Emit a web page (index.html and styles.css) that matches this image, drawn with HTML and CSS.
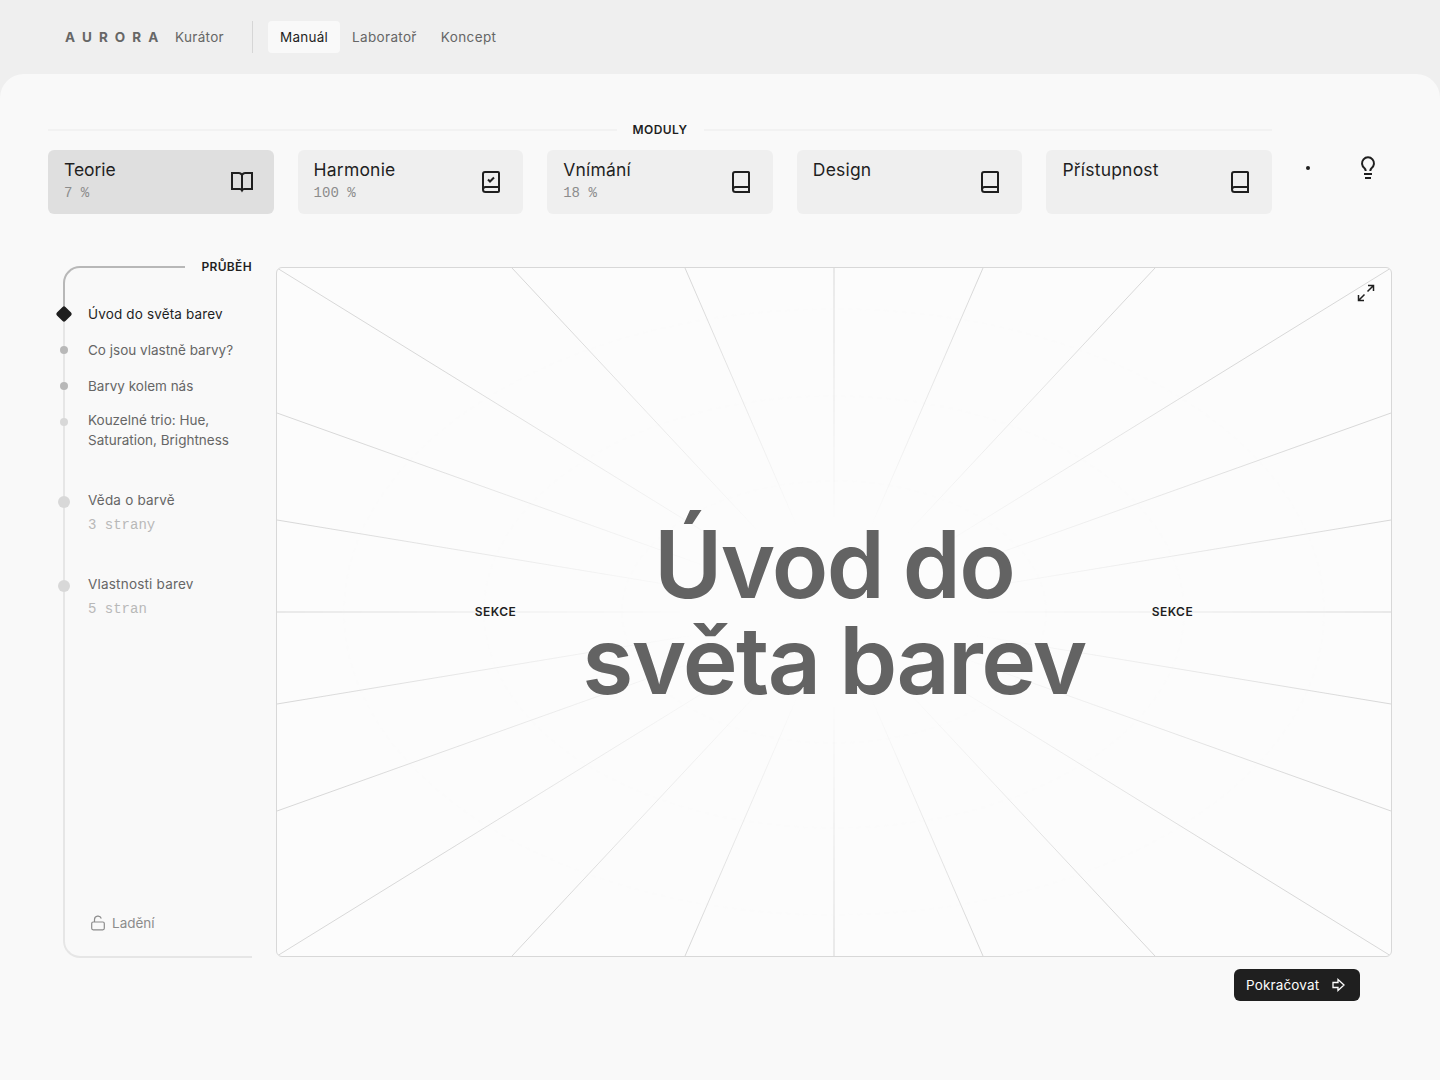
FILE: index.html
```html
<!DOCTYPE html>
<html lang="cs">
<head>
<meta charset="utf-8">
<title>Aurora – Manuál</title>
<link rel="stylesheet" href="styles.css">
</head>
<body>
<header class="topbar">
  <a class="brand"><span class="brand-name">AURORA</span><span>Kurátor</span></a>
  <nav class="nav">
    <a class="nav-item active">Manuál</a>
    <a class="nav-item">Laboratoř</a>
    <a class="nav-item wide">Koncept</a>
  </nav>
</header>
<main class="sheet">
  <section class="top">
    <div class="modules">
      <div class="modules-title"><i></i><span class="label">MODULY</span><i></i></div>
      <div class="cards">
        <div class="card current"><div><h2>Teorie</h2><p>7 %</p></div>
          <svg class="icon" viewBox="0 0 24 24"><path d="M12 5v16M12 5c-.8-1.200-1.800-2-3-2H2v16h8c1 0 1.600.8 2 1.500.4-.7 1-1.500 2-1.500h8V3h-7c-1.200 0-2.200.8-3 2"/></svg></div>
        <div class="card"><div><h2>Harmonie</h2><p>100 %</p></div>
          <svg class="icon" viewBox="0 0 24 24"><path d="M4 19.500V4a2 2 0 0 1 2-2h13a1 1 0 0 1 1 1v18a1 1 0 0 1-1 1H6.500a2.500 2.500 0 0 1 0-5H20M9 9.500l2 2 4-4"/></svg></div>
        <div class="card"><div><h2>Vnímání</h2><p>18 %</p></div>
          <svg class="icon" viewBox="0 0 24 24"><path d="M4 19.500V4a2 2 0 0 1 2-2h13.400a.6.6 0 0 1 .6.600V22H6.500a2.500 2.500 0 0 1 0-5H20"/></svg></div>
        <div class="card"><div><h2>Design</h2></div>
          <svg class="icon" viewBox="0 0 24 24"><path d="M4 19.500V4a2 2 0 0 1 2-2h13.400a.6.6 0 0 1 .6.600V22H6.500a2.500 2.500 0 0 1 0-5H20"/></svg></div>
        <div class="card"><div><h2>Přístupnost</h2></div>
          <svg class="icon" viewBox="0 0 24 24"><path d="M4 19.500V4a2 2 0 0 1 2-2h13.400a.6.6 0 0 1 .6.600V22H6.500a2.500 2.500 0 0 1 0-5H20"/></svg></div>
      </div>
    </div>
    <div class="tools">
      <span class="dot"></span>
      <svg class="icon" viewBox="0 0 24 24"><path d="M9.700 15c0-1.300-.4-2-1.200-2.800a6 6 0 1 1 7 0c-.8.800-1.200 1.500-1.200 2.800M8 18h8M9 22h6"/></svg>
    </div>
  </section>

  <section class="workspace">
    <aside class="progress">
      <div class="rail-head"><div class="curve"></div><span class="label">PRŮBĚH</span></div>
      <div class="rail-body">
        <ul class="steps">
          <li class="step now"><b></b><span>Úvod do světa barev</span></li>
          <li class="step seen"><b></b><span>Co jsou vlastně barvy?</span></li>
          <li class="step seen"><b></b><span>Barvy kolem nás</span></li>
          <li class="step two"><b></b><span>Kouzelné trio: Hue,<br>Saturation, Brightness</span></li>
          <li class="step part"><b></b><span>Věda o barvě</span><small>3 strany</small></li>
          <li class="step part"><b></b><span>Vlastnosti barev</span><small>5 stran</small></li>
        </ul>
        <div class="debug"><svg class="lock" viewBox="0 0 16 16"><rect x="1.700" y="7" width="12.600" height="7.800" rx="1.500"/><path d="M4.500 7V4.500a3.500 3.500 0 0 1 6.800-1"/></svg><span>Ladění</span></div>
      </div>
    </aside>
    <div class="stage-col">
      <div class="stage">
        <svg class="rays" viewBox="0 0 1114 688">
          <defs>
            <radialGradient id="fade" gradientUnits="userSpaceOnUse" cx="0" cy="0" r="1" gradientTransform="translate(557 344) scale(557 344)">
              <stop offset=".26" stop-color="#fff" stop-opacity="0"/><stop offset="1" stop-color="#fff"/>
            </radialGradient>
            <mask id="m" maskUnits="userSpaceOnUse" x="0" y="0" width="1114" height="688"><rect width="1114" height="688" fill="url(#fade)"/></mask>
          </defs>
          <g class="rings"><ellipse cx="557" cy="344" rx="212" ry="131"/><ellipse cx="557" cy="344" rx="350" ry="216"/><ellipse cx="557" cy="344" rx="490" ry="303"/></g>
          <g mask="url(#m)"><path class="ray" d="M0 0L1114 688M235 0L878 688M408 0L706 688M706 0L408 688M878 0L235 688M1114 0L0 688M0 145L1114 543M0 252L1114 436M0 436L1114 252M0 543L1114 145"/><path class="axis" d="M557 0V688M0 344H1114"/></g>
        </svg>
        <svg class="expand" viewBox="0 0 18 18"><path d="M10.500 7.500L16.500 1.500M11 1.500h5.500v5.500M7.500 10.500L1.500 16.500M1.500 11v5.500h5.500"/></svg>
        <span class="label">SEKCE</span>
        <h1>Úvod do<br>světa barev</h1>
        <span class="label">SEKCE</span>
      </div>
      <div class="actions"><button class="next"><span>Pokračovat</span><svg viewBox="0 0 16 16"><path d="M2 5.500h5V2.500l6 5.500-6 5.500v-3H2z"/></svg></button></div>
    </div>
  </section>
</main>
</body>
</html>
```
FILE: styles.css
```css
* { box-sizing: border-box; }
body { margin: 0; height: 1080px; overflow: hidden; background: #efefef; color: #1f1f1f; font: 400 13.5px/20px Inter, sans-serif; display: flex; flex-direction: column; }
h1, h2, p, ul { margin: 0; padding: 0; font-weight: inherit; }
.topbar { flex: none; height: 74px; padding-left: 65px; display: flex; align-items: center; color: #666; letter-spacing: .33px; }
.brand { display: flex; width: 188px; height: 32px; align-items: center; border-right: 1px solid #d6d6d6; margin-right: 15px; }
.brand-name { font-weight: 700; letter-spacing: 7.1px; width: 110px; }
.nav { display: flex; }
.nav-item { height: 32px; padding: 6px 12px; border-radius: 4px; }
.nav-item.active { background: #f9f9f9; color: #1f1f1f; letter-spacing: .25px; }
.nav-item.wide { letter-spacing: .4px; }
.sheet { flex: 1; background: #f9f9f9; border-radius: 24px 24px 0 0; padding: 46px 48px 0; }
.top { display: flex; height: 146px; }
.modules { width: 1224px; }
.modules-title { display: flex; align-items: center; gap: 16px; height: 20px; margin-bottom: 10px; }
.modules-title i { flex: 1; height: 2px; background: #f2f2f2; }
.label { font-size: 12px; line-height: 20px; font-weight: 600; letter-spacing: .45px; }
.cards { display: grid; grid-template-columns: repeat(5, 1fr); gap: 24px; }
.card { height: 64px; border-radius: 6px; background: #efefef; padding: 8px 20px 8px 16px; display: flex; align-items: center; justify-content: space-between; }
.card > div { align-self: stretch; }
.card.current { background: #dfdfdf; }
.card h2 { font-size: 17.5px; line-height: 24px; letter-spacing: .2px; }
.card.current h2 { letter-spacing: -.05px; }
.card p { font: 14px/20px "Liberation Mono", monospace; color: #8c8c8c; padding-top: 1px; }
.icon { width: 24px; height: 24px; fill: none; stroke: #1f1f1f; stroke-width: 2; }
.tools { flex: 1; display: flex; align-items: center; padding: 0 12px 4px 34px; justify-content: space-between; height: 100px; }
.dot { width: 4px; height: 4px; border-radius: 50%; background: #1f1f1f; }
.workspace { display: flex; }
.progress { width: 189px; height: 692px; margin-left: 15px; margin-right: 24px; display: flex; flex-direction: column; }
.rail-head { height: 48px; display: flex; gap: 16px; }
.rail-head .label { margin-top: -9px; letter-spacing: .35px; }
.curve { flex: 1; border: solid #b8b8b8; border-width: 2px 0 0 2px; border-top-left-radius: 17px; }
.rail-body { flex: 1; border: solid #e6e6e6; border-width: 0 0 2px 2px; border-bottom-left-radius: 17px; display: flex; flex-direction: column; justify-content: space-between; }
.steps { list-style: none; margin-top: -18px; }
.step { position: relative; height: 36px; padding: 8px 0 0 23px; color: #666; }
.step span, .step small { display: block; width: max-content; }
.step b { position: absolute; left: -5px; top: 14px; width: 8px; height: 8px; border-radius: 50%; background: #b8b8b8; }
.step.now { color: #1f1f1f; letter-spacing: .15px; }
.step.now b { left: -7px; top: 12px; width: 12px; height: 12px; border-radius: 2px; background: #1f1f1f; transform: rotate(45deg); }
.step.two { height: 78px; padding-top: 6px; }
.step.two b { background: #d8d8d8; }
.step.part { height: 84px; letter-spacing: .2px; }
.step.part b { left: -7px; width: 12px; height: 12px; background: #d8d8d8; }
.step small { font: 14px/20px "Liberation Mono", monospace; letter-spacing: 0; color: #b8b8b8; margin-top: 5px; }
.debug { display: flex; align-items: center; gap: 6px; padding: 0 0 23px 25px; color: #8c8c8c; }
.lock { width: 16px; height: 16px; fill: none; stroke: #8c8c8c; stroke-width: 1.2; }
.stage-col { flex: 1; margin-top: 1px; }
.stage { position: relative; height: 690px; border: 1px solid #d8d8d8; border-radius: 6px; background: #fcfcfc; overflow: hidden; display: flex; align-items: center; justify-content: center; gap: 66px; }
.rays { position: absolute; inset: 0; }
.ray { stroke: #d8d8d8; fill: none; stroke-width: 1; }
.axis { stroke: #e9e9e9; stroke-width: 2; }
.rings { fill: none; stroke: #fbfbfb; stroke-width: 2; stroke-dasharray: 5 4; }
.stage .label, .stage h1 { position: relative; }
.stage h1 { font-size: 93px; line-height: 96px; font-weight: 600; letter-spacing: -1.7px; word-spacing: -2px; color: #636363; text-align: center; white-space: nowrap; }
.expand { position: absolute; right: 16px; top: 16px; width: 18px; height: 18px; fill: none; stroke: #1f1f1f; stroke-width: 1.5; }
.actions { display: flex; justify-content: flex-end; padding: 12px 32px 0 0; }
.next { width: 126px; height: 32px; border: 0; border-radius: 6px; background: #1f1f1f; color: #fcfcfc; font: inherit; letter-spacing: .15px; padding: 0 13px 0 12px; display: flex; align-items: center; justify-content: space-between; }
.next svg { width: 16px; height: 16px; fill: none; stroke: #fcfcfc; stroke-width: 1.3; }
```
